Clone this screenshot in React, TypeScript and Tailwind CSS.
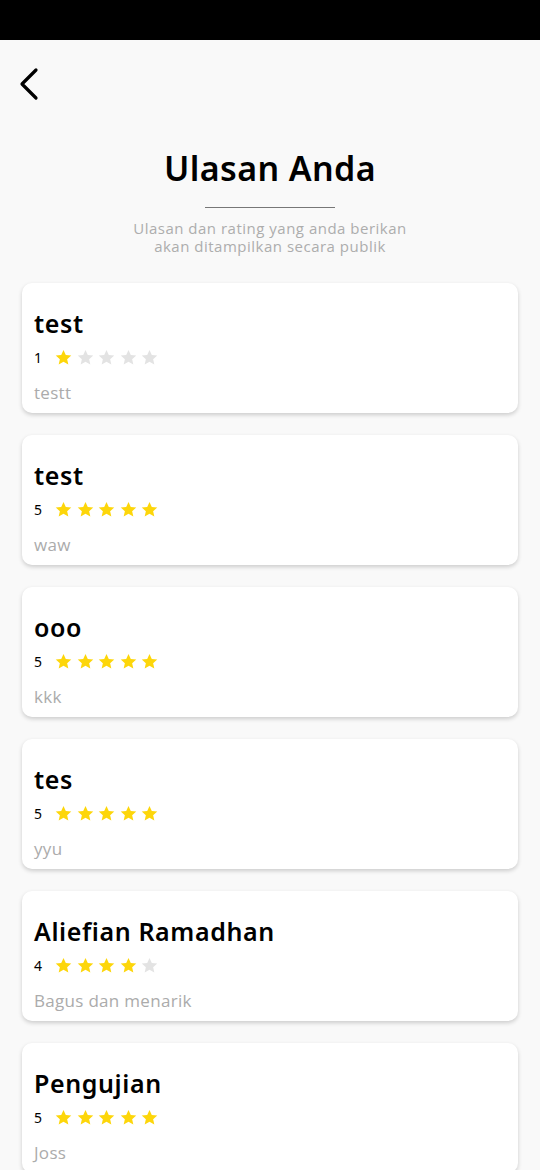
import React from 'react';

const REVIEWS = [
  { id: 1, name: 'test', rating: 1, comment: 'testt' },
  { id: 2, name: 'test', rating: 5, comment: 'waw' },
  { id: 3, name: 'ooo', rating: 5, comment: 'kkk' },
  { id: 4, name: 'tes', rating: 5, comment: 'yyu' },
  { id: 5, name: 'Aliefian Ramadhan', rating: 4, comment: 'Bagus dan menarik' },
  { id: 6, name: 'Pengujian', rating: 5, comment: 'Joss' },
];

const Star = ({ on }: { on: boolean }) => (
  <svg width="19" height="19" viewBox="0 0 24 24" className={on ? 'text-[#fdd60a]' : 'text-[#e3e3e3]'}>
    <path fill="currentColor" d="M12 2.5l2.9 6.3 6.9.7-5.2 4.6 1.5 6.8L12 17.4l-6.1 3.5 1.5-6.8-5.2-4.6 6.9-.7z" />
  </svg>
);

const ReviewCard = ({ name, rating, comment }: { name: string; rating: number; comment: string }) => (
  <div className="bg-white rounded-[10px] shadow-[0_2px_4px_rgba(0,0,0,0.18)] px-3 pt-[25px] pb-[8px]">
    <div className="text-[25px] leading-[30px] font-semibold text-black tracking-[0.6px]" style={{ fontFamily: '"Noto Sans", sans-serif' }}>
      {name}
    </div>
    <div className="flex items-center mt-[8px] h-[22px]">
      <span className="text-[14px] text-black mr-[12px]" style={{ fontFamily: '"Noto Sans", sans-serif' }}>{rating}</span>
      <div className="flex gap-[2.5px]">
        {[1, 2, 3, 4, 5].map(i => <Star key={i} on={i <= rating} />)}
      </div>
    </div>
    <div className="text-[17px] leading-[24px] text-[#ababab] mt-[13px] tracking-[0.3px]" style={{ fontFamily: '"Open Sans", sans-serif' }}>
      {comment}
    </div>
  </div>
);

export default function App() {
  return (
    <div className="w-[540px] h-[1170px] overflow-hidden bg-[#f9f9f9]">
      <div className="h-[40px] bg-black" />
      <div className="px-[16px] pt-[24px] h-[50px]">
        <svg width="32" height="40" viewBox="0 0 32 40" fill="none" stroke="black" strokeWidth="3.2" strokeLinecap="round" strokeLinejoin="round">
          <path d="M20 6 L6 20 L20 34" />
        </svg>
      </div>
      <div className="flex flex-col items-center mt-[58px]">
        <h1 className="text-[34px] leading-[40px] font-semibold text-black tracking-[0.4px]" style={{ fontFamily: '"Noto Sans", sans-serif' }}>
          Ulasan Anda
        </h1>
        <div className="w-[130px] h-[1px] bg-[#777] mt-[19px]" />
        <div className="flex flex-col items-center mt-[11px] text-[15px] leading-[18px] text-[#adadad] tracking-[0.5px]" style={{ fontFamily: '"Open Sans", sans-serif' }}>
          <span>Ulasan dan rating yang anda berikan</span>
          <span>akan ditampilkan secara publik</span>
        </div>
      </div>
      <div className="flex flex-col gap-[22px] px-[22px] mt-[28px]">
        {REVIEWS.map(r => <ReviewCard key={r.id} {...r} />)}
      </div>
    </div>
  );
}
